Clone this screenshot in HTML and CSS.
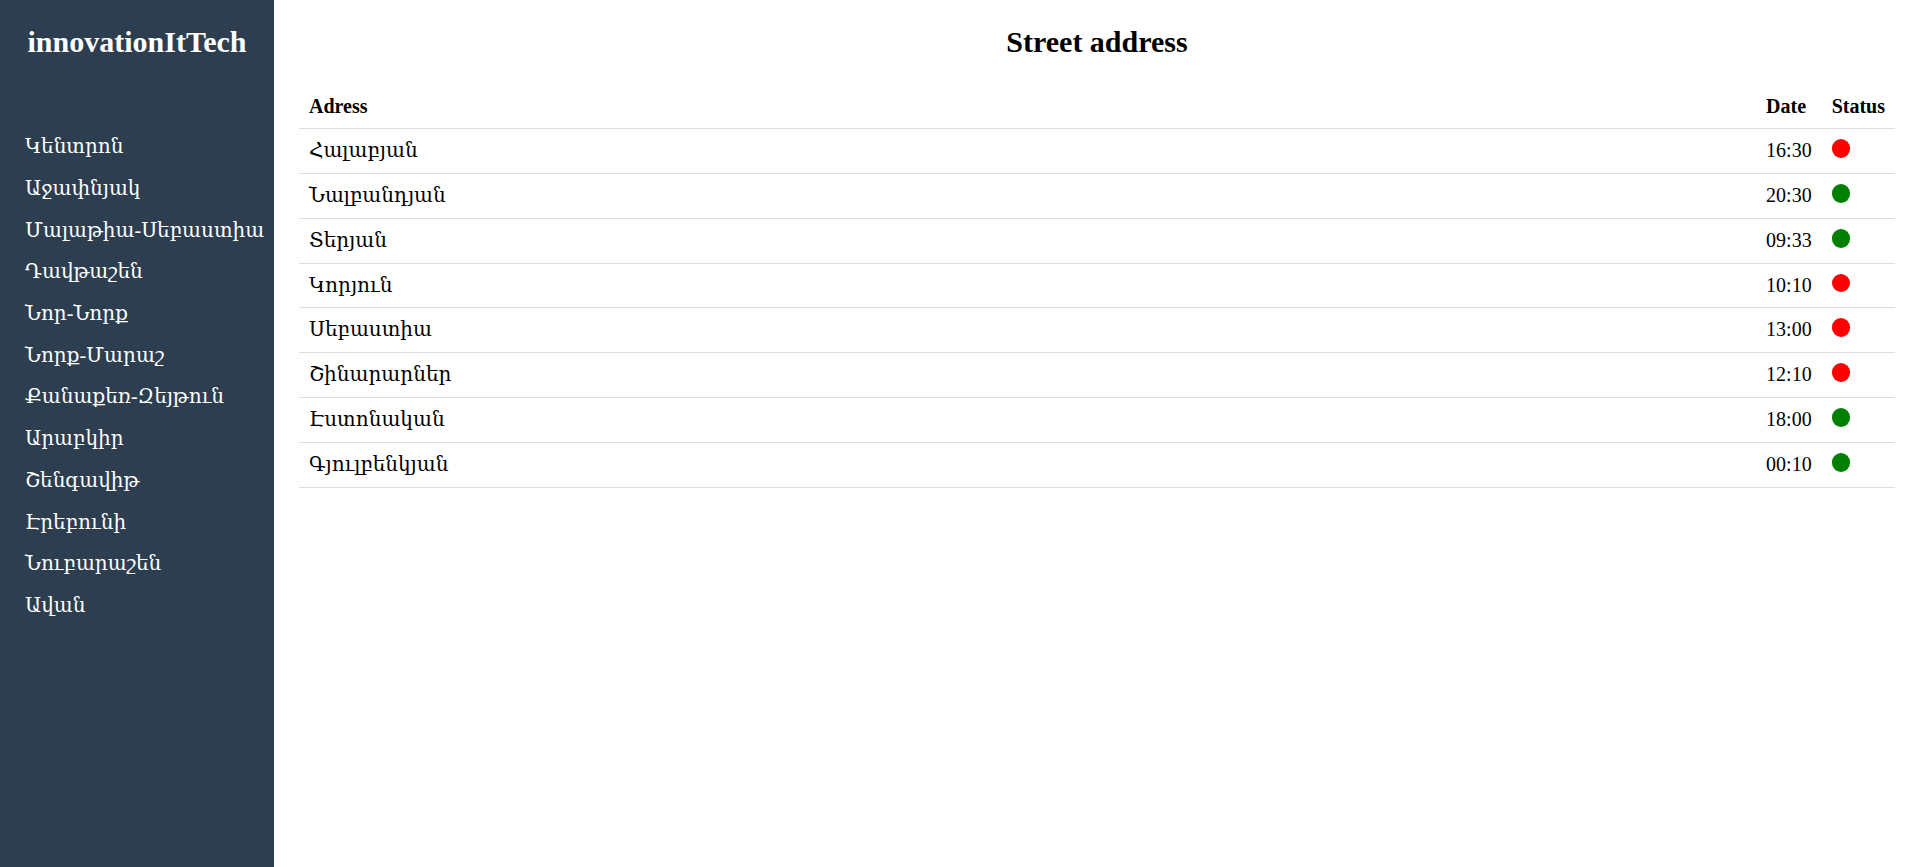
FILE: index.html
```html
<!DOCTYPE html>
<html lang="hy">
<head>
<meta charset="utf-8">
<title>innovationItTech</title>
<link rel="stylesheet" href="styles.css">
</head>
<body>
<aside class="sidebar">
  <h2 class="brand">innovationItTech</h2>
  <ul class="nav">
    <li>Կենտրոն</li>
    <li>Աջափնյակ</li>
    <li>Մալաթիա-Սեբաստիա</li>
    <li>Դավթաշեն</li>
    <li>Նոր-Նորք</li>
    <li>Նորք-Մարաշ</li>
    <li>Քանաքեռ-Զեյթուն</li>
    <li>Արաբկիր</li>
    <li>Շենգավիթ</li>
    <li>Էրեբունի</li>
    <li>Նուբարաշեն</li>
    <li>Ավան</li>
  </ul>
</aside>
<main class="main">
  <h2 class="page-title">Street address</h2>
  <table class="addr-table">
    <thead>
      <tr><th class="col-addr">Adress</th><th>Date</th><th>Status</th></tr>
    </thead>
    <tbody>
      <tr><td>Հալաբյան</td><td>16:30</td><td><span class="dot red"></span></td></tr>
      <tr><td>Նալբանդյան</td><td>20:30</td><td><span class="dot green"></span></td></tr>
      <tr><td>Տերյան</td><td>09:33</td><td><span class="dot green"></span></td></tr>
      <tr><td>Կորյուն</td><td>10:10</td><td><span class="dot red"></span></td></tr>
      <tr><td>Սեբաստիա</td><td>13:00</td><td><span class="dot red"></span></td></tr>
      <tr><td>Շինարարներ</td><td>12:10</td><td><span class="dot red"></span></td></tr>
      <tr><td>Էստոնական</td><td>18:00</td><td><span class="dot green"></span></td></tr>
      <tr><td>Գյուլբենկյան</td><td>00:10</td><td><span class="dot green"></span></td></tr>
    </tbody>
  </table>
</main>
</body>
</html>
```
FILE: styles.css
```css
html, body {
  margin: 0;
  padding: 0;
  height: 100%;
}
body {
  display: flex;
  font-family: "Liberation Serif", "DejaVu Serif", serif;
  font-size: 20px;
  color: #000;
  background: #fff;
}
.sidebar {
  width: 274px;
  flex: 0 0 274px;
  background: #2c3e50;
  color: #fff;
  min-height: 100vh;
}
.brand {
  margin: 25px 0 0;
  font-size: 30px;
  line-height: 34.5px;
  font-weight: bold;
  text-align: center;
}
.nav {
  list-style: none;
  margin: 66.5px 0 0;
  padding: 0;
}
.nav li {
  padding: 9.35px 25px;
  line-height: 23px;
  white-space: nowrap;
}
.main {
  flex: 1;
  padding: 0 23px 0 25px;
}
.page-title {
  margin: 25px 0;
  font-size: 30px;
  line-height: 34.5px;
  font-weight: bold;
  text-align: center;
}
.addr-table {
  width: 100%;
  border-collapse: collapse;
}
.addr-table th,
.addr-table td {
  padding: 10px;
  height: 23.8px;
  line-height: 23.8px;
  text-align: left;
  border-bottom: 1px solid #ddd;
  white-space: nowrap;
}
.addr-table th {
  font-weight: bold;
}
.col-addr {
  width: 100%;
}
.dot {
  display: inline-block;
  width: 18.75px;
  height: 18.75px;
  border-radius: 50%;
  vertical-align: text-top;
}
.dot.red { background: #ff0000; }
.dot.green { background: #008000; }
```
